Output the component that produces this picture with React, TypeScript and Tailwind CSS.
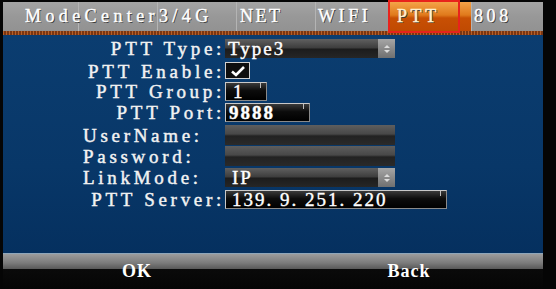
import React from "react";

const serif = "font-['Liberation_Serif','DejaVu_Serif',serif]";

type Tab = { label: string; width: string; pad: string; active?: boolean; bg?: string; track: string };

const grayTab = "bg-[linear-gradient(#a4a4a4,#989898_50%,#929292)]";

const tabs: Tab[] = [
  {
    label: "ModeCenter3/4G",
    width: "w-[233px]",
    pad: "pl-[22px]",
    track: "tracking-[4.4px]",
    bg: "bg-[linear-gradient(90deg,transparent_75px,#b4b4b4_75px,#b4b4b4_76px,transparent_76px,transparent_154px,#b4b4b4_154px,#b4b4b4_155px,transparent_155px),linear-gradient(#a4a4a4,#989898_50%,#929292)]",
  },
  { label: "NET", width: "w-[79px]", pad: "pl-[3px]", track: "tracking-[2.5px]" },
  { label: "WIFI", width: "w-[73px]", pad: "pl-[2px]", track: "tracking-[3.6px]" },
  { label: "PTT", width: "w-[83px]", pad: "pl-[8px]", active: true, track: "tracking-[3.6px]" },
  { label: "808", width: "w-[72px]", pad: "pl-[2px]", track: "tracking-[3.6px]" },
];

function TabBar() {
  return (
    <div className="relative">
      <div className="flex h-[29px]">
        {tabs.map((t, i) => (
          <div
            key={i}
            className={`${t.width} ${t.pad} flex h-full items-center whitespace-nowrap ${
              i > 0 ? "border-l border-[#b4b4b4]" : ""
            } ${
              t.active
                ? "border-l-[#c8c8c8] bg-[linear-gradient(#f4a448,#e07a1c_45%,#c85004_55%,#c04a02)] text-[#fff2d0]"
                : `${t.bg ?? grayTab} text-white`
            } ${serif} text-[18px] ${t.track} [text-shadow:1px_1px_0_#3a3a3a] [-webkit-text-stroke:0.4px_currentColor]`}
          >
            {t.label}
          </div>
        ))}
      </div>
      <div className="h-[4px] bg-[#9c4a1a] bg-[repeating-linear-gradient(90deg,#b86028_0px,#b86028_1px,#7a3612_1px,#7a3612_3px)]" />
      <div className="pointer-events-none absolute left-[385px] top-[-2px] h-[33px] w-[72px] border-2 border-[#e8231c]" />
    </div>
  );
}

function Label({ text, align }: { text: string; align: "right" | "left" }) {
  return (
    <div
      className={`w-[142px] shrink-0 ${
        align === "right" ? "text-right" : "text-left"
      } ${serif} text-[19px] leading-none tracking-[3.7px] text-[#f2f2f2] [-webkit-text-stroke:0.45px_#f2f2f2]`}
    >
      {text}
    </div>
  );
}

function SelectBox({ value, pad }: { value: string; pad: string }) {
  return (
    <div className="flex h-[19px] w-[170px]">
      <div
        className={`flex flex-1 items-center ${pad} bg-[linear-gradient(#606060,#3c3c3c_48%,#1c1c1c_52%,#262626)] ${serif} text-[19px] leading-none tracking-[2px] text-white [-webkit-text-stroke:0.4px_#ffffff]`}
      >
        {value}
      </div>
      <div className="flex w-[17px] flex-col items-center justify-center gap-[2px] bg-[linear-gradient(#a6a6a6,#8a8a8a_50%,#707070)]">
        <span className="h-0 w-0 border-x-[3px] border-b-[3px] border-x-transparent border-b-[#dcdcdc]" />
        <span className="h-0 w-0 border-x-[3px] border-t-[3px] border-x-transparent border-t-[#dcdcdc]" />
      </div>
    </div>
  );
}

function TextBox({ value, width, pad }: { value: string; width: string; pad: string }) {
  return (
    <div
      className={`relative flex h-[19px] ${width} items-center ${pad} border border-[#c8c8c8] border-b-[#8a8a8a] border-r-[#8a8a8a] bg-[linear-gradient(#3a3a3a,#0c0c0c_45%,#000)] ${serif} text-[19px] leading-none tracking-[2px] text-white [-webkit-text-stroke:0.4px_#ffffff]`}
    >
      {value}
      <span className="absolute right-[5px] top-0 h-[5px] w-px bg-[#bdbdbd]" />
    </div>
  );
}

function PlainBox() {
  return (
    <div className="h-[20px] w-[170px] bg-[linear-gradient(#5e5e5e,#484848_45%,#222_55%,#2a2a2a)]" />
  );
}

function CheckBox() {
  return (
    <div className="flex h-[17px] w-[25px] items-center justify-center border border-[#d0d0d0] bg-[#0e0e0e]">
      <svg width="16" height="12" viewBox="0 0 16 12">
        <path d="M2 6.5 L6 10 L14 2" fill="none" stroke="#ffffff" strokeWidth="2.6" />
      </svg>
    </div>
  );
}

function Row({ h, children }: { h: string; children: React.ReactNode }) {
  return <div className={`flex ${h} items-start`}>{children}</div>;
}

function FormBody() {
  return (
    <div className="h-[218px] bg-[linear-gradient(#0b3d70,#083768_60%,#05305f)] pt-[4px]">
      <div className="ml-[80px] flex flex-col">
        <Row h="h-[21px]">
          <div className="flex h-[19px] items-center">
            <Label text="PTT Type:" align="right" />
          </div>
          <SelectBox value="Type3" pad="pl-[3px]" />
        </Row>
        <Row h="h-[22px]">
          <div className="flex h-[19px] items-center pt-[3px]">
            <Label text="PTT Enable:" align="right" />
          </div>
          <div className="pt-[2px]">
            <CheckBox />
          </div>
        </Row>
        <Row h="h-[21px]">
          <div className="flex h-[19px] items-center">
            <Label text="PTT Group:" align="right" />
          </div>
          <TextBox value="1" width="w-[42px]" pad="pl-[7px]" />
        </Row>
        <Row h="h-[22px]">
          <div className="flex h-[19px] items-center">
            <Label text="PTT Port:" align="right" />
          </div>
          <TextBox value="9888" width="w-[85px]" pad="pl-[3px] font-bold" />
        </Row>
        <Row h="h-[21px]">
          <div className="flex h-[20px] items-center">
            <Label text="UserName:" align="left" />
          </div>
          <PlainBox />
        </Row>
        <Row h="h-[22px]">
          <div className="flex h-[20px] items-center">
            <Label text="Password:" align="left" />
          </div>
          <PlainBox />
        </Row>
        <Row h="h-[22px]">
          <div className="flex h-[19px] items-center">
            <Label text="LinkMode:" align="left" />
          </div>
          <SelectBox value="IP" pad="pl-[7px]" />
        </Row>
        <Row h="h-[20px]">
          <div className="flex h-[19px] items-center">
            <Label text="PTT Server:" align="right" />
          </div>
          <TextBox value="139. 9. 251. 220" width="w-[222px]" pad="pl-[6px]" />
        </Row>
      </div>
    </div>
  );
}

function BottomBar() {
  return (
    <div className="h-[36px] border-t border-[#8ea6ba] bg-[linear-gradient(#9c9c9c,#7c7c7c_25%,#5a5a5a_42%,#0a0a0a_43%,#050505)]">
      <div className="flex pt-[8px]">
        <div className={`flex-1 text-center ${serif} text-[18px] font-bold leading-none tracking-[1px] text-white`}>
          OK
        </div>
        <div className={`flex-1 pl-[4px] text-center ${serif} text-[18px] font-bold leading-none tracking-[1px] text-white`}>
          Back
        </div>
      </div>
    </div>
  );
}

export default function App() {
  return (
    <div className="h-[289px] w-[556px] overflow-hidden bg-[#050505]">
      <div className="ml-[3px] w-[540px] pt-[2px]">
        <TabBar />
        <FormBody />
        <BottomBar />
      </div>
    </div>
  );
}
